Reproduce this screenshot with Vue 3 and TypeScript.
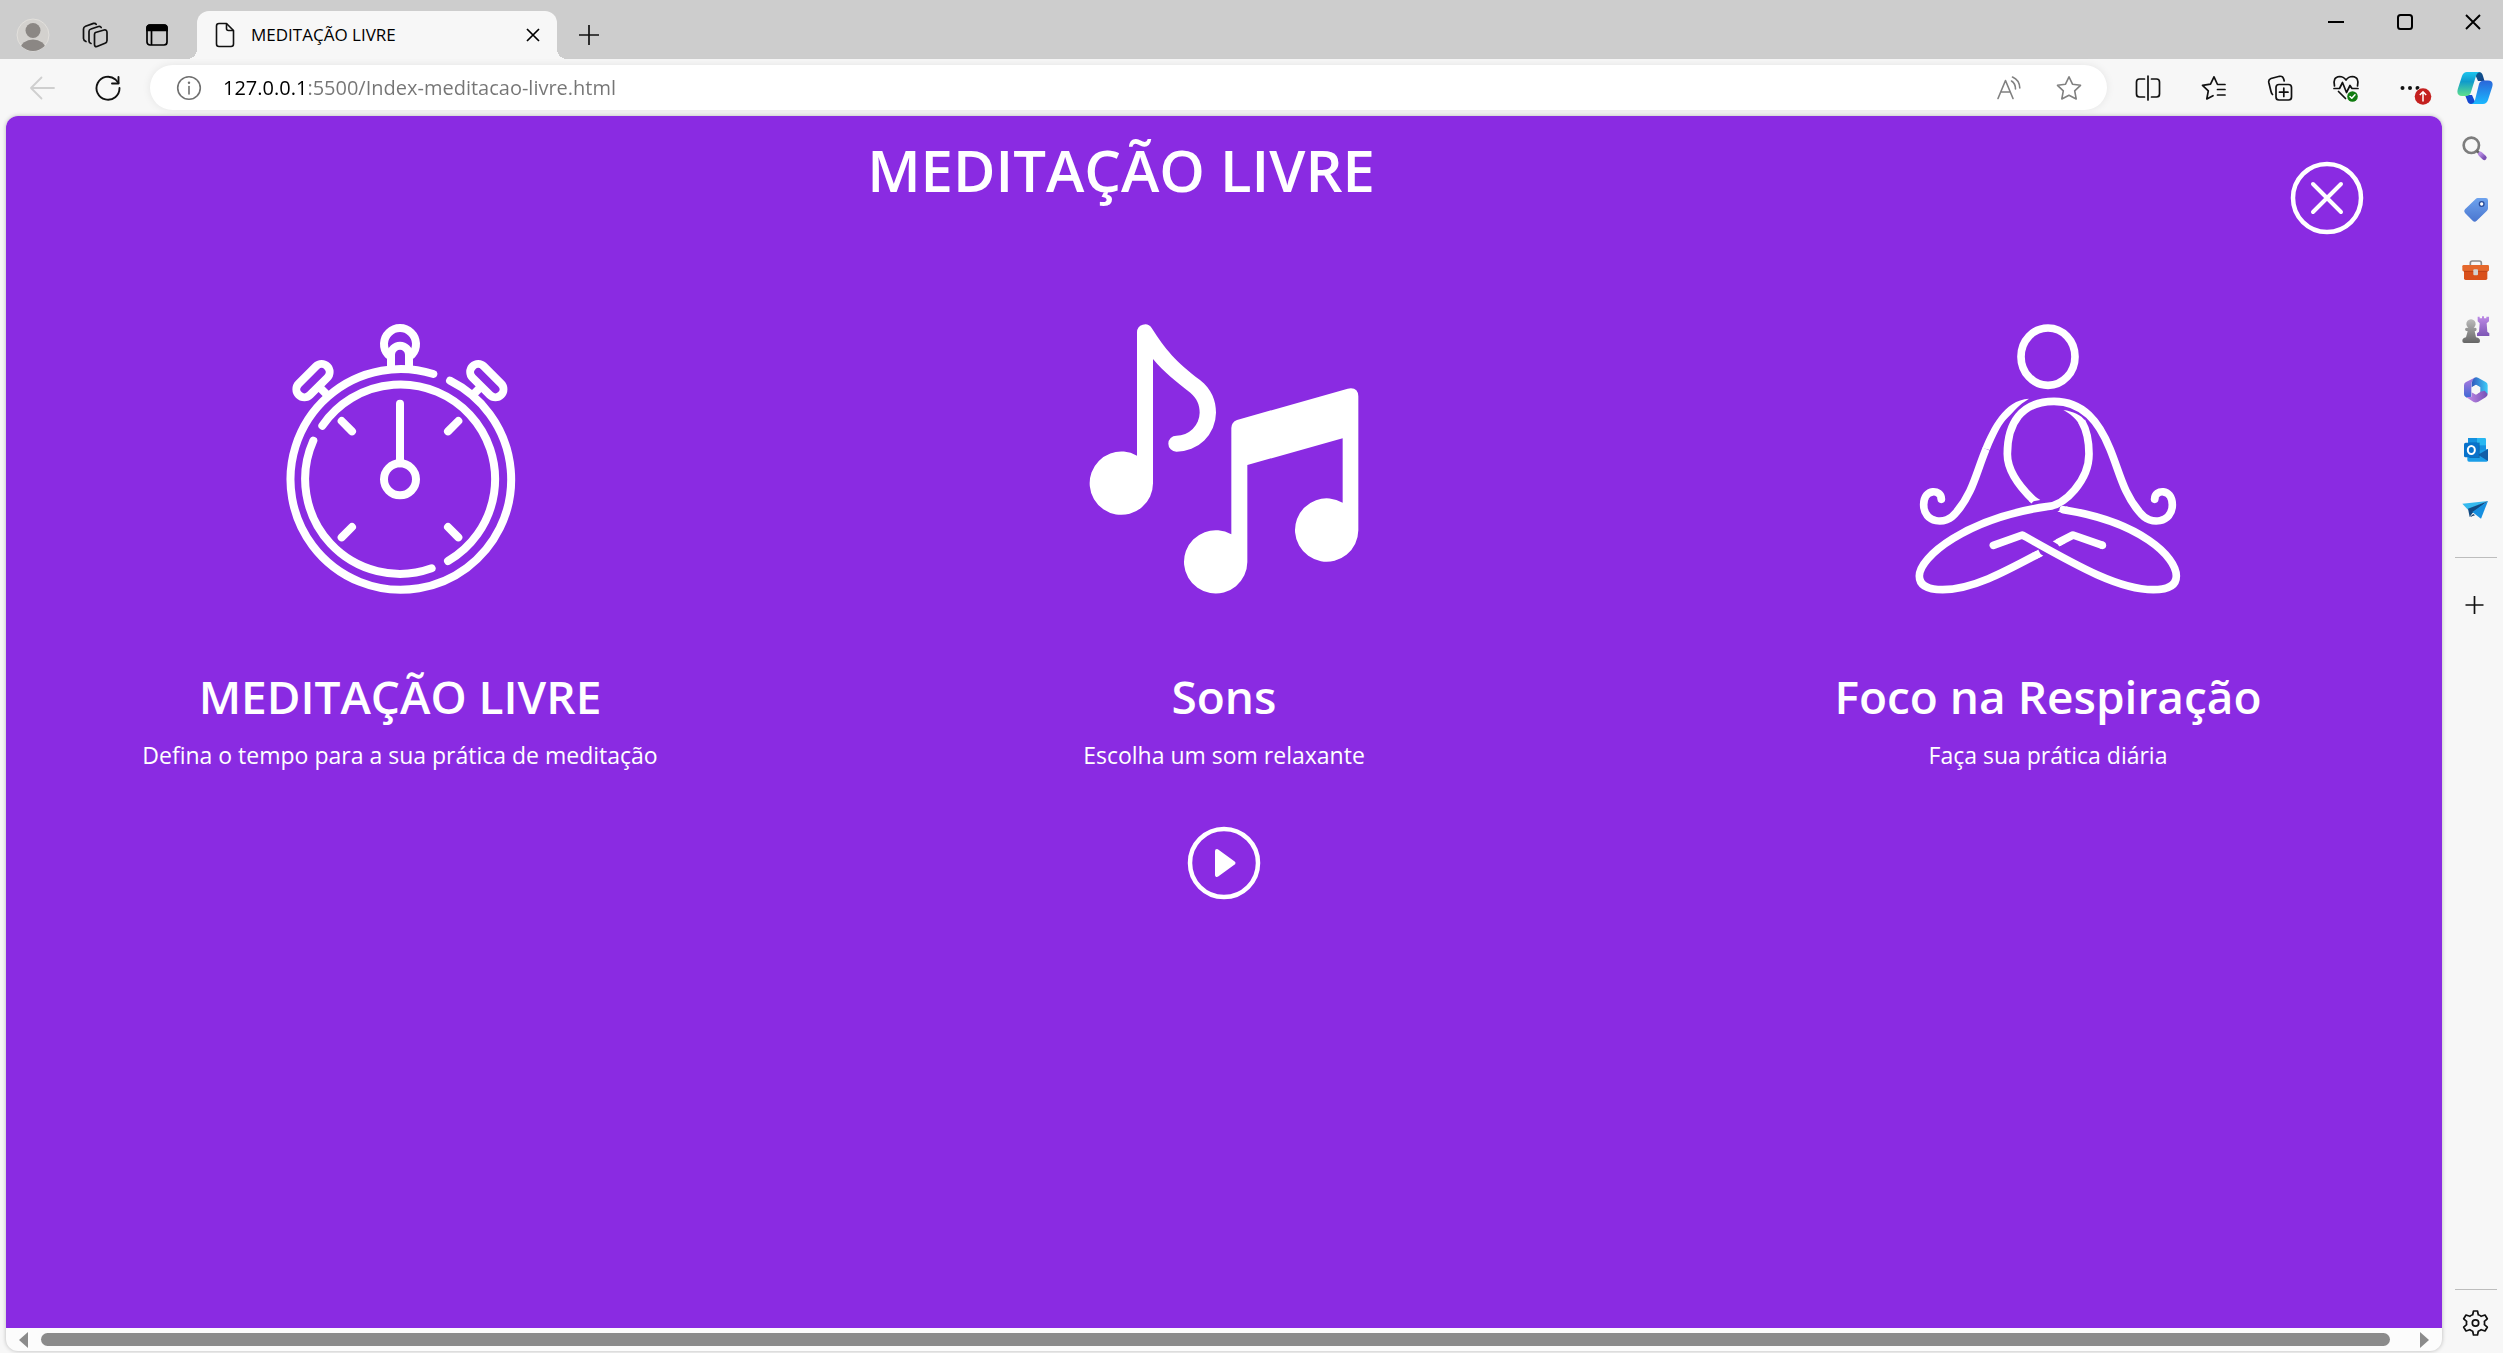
<script setup lang="ts">
import { ref } from 'vue'

const address = ref('127.0.0.1:5500/Index-meditacao-livre.html')
const pageTitle = 'MEDITAÇÃO LIVRE'

interface Card {
  id: 'timer' | 'sounds' | 'breath'
  title: string
  text: string
}

const cards: Card[] = [
  { id: 'timer', title: 'MEDITAÇÃO LIVRE', text: 'Defina o tempo para a sua prática de meditação' },
  { id: 'sounds', title: 'Sons', text: 'Escolha um som relaxante' },
  { id: 'breath', title: 'Foco na Respiração', text: 'Faça sua prática diária' },
]
</script>

<template>
  <div class="browser">
    <header class="tabbar">
      <div class="tab-tools">
        <button class="slot" aria-label="Perfil">
          <svg width="34" height="34" viewBox="0 0 34 34">
            <defs><clipPath id="avatar"><circle cx="17" cy="17" r="16" /></clipPath></defs>
            <circle cx="17" cy="17" r="16" fill="#d3d1ce" stroke="#e2e0dc" />
            <g clip-path="url(#avatar)" fill="#8b8784">
              <circle cx="17" cy="12.500" r="7.500" />
              <ellipse cx="17" cy="30.500" rx="12.500" ry="9" />
            </g>
          </svg>
        </button>
        <button class="slot" aria-label="Espaços de trabalho">
          <svg width="26" height="26" viewBox="0 0 26 26" fill="none" stroke="#111" stroke-width="1.700" stroke-linejoin="round" stroke-linecap="round">
            <path d="M13.500 10.500 L22 8 Q25 7.500 25 10.500 V18.500 Q25 20.500 23 21.200 L15 24.500 Q12.500 25 12.500 22.500 V12.500 Q12.500 11 13.500 10.500Z" />
            <path d="M9 21.500 Q7 21 7 19 V9.500 Q7 7.500 9 7 L16.500 4.500 Q18.500 4 19.200 5.500" />
            <path d="M4 19.500 Q1.500 18.500 1.500 16.500 V7 Q1.500 5 3.500 4.200 L11.500 1.400 Q13.500 1 14.200 2.300" />
          </svg>
        </button>
        <button class="slot" aria-label="Menu de ações da guia">
          <svg width="24" height="24" viewBox="0 0 24 24" fill="none" stroke="#000" stroke-width="1.700">
            <rect x="2" y="2" width="20" height="20" rx="3" />
            <path d="M2 7.500 V5 Q2 2 5 2 H19 Q22 2 22 5 V7.500Z" fill="#000" />
            <path d="M6.500 7 V22" />
          </svg>
        </button>
      </div>
      <div class="tab">
        <svg width="20" height="26" viewBox="0 0 20 26" fill="none" stroke="#111" stroke-width="1.600" stroke-linejoin="round">
          <path d="M4 1.500 H11.500 L18.500 8.500 V22 Q18.500 24.500 16 24.500 H4 Q1.500 24.500 1.500 22 V4 Q1.500 1.500 4 1.500Z" />
          <path d="M11.500 1.500 V6.500 Q11.500 8.500 13.500 8.500 H18.500" />
        </svg>
        <span class="tab-title">{{ pageTitle }}</span>
        <button class="tab-close" aria-label="Fechar guia">
          <svg width="14" height="14" viewBox="0 0 14 14" stroke="#000" stroke-width="1.700"><path d="M1 1 L13 13 M13 1 L1 13" /></svg>
        </button>
      </div>
      <button class="slot" aria-label="Nova guia">
        <svg width="22" height="22" viewBox="0 0 22 22" stroke="#111" stroke-width="1.700"><path d="M11 1 V21 M1 11 H21" /></svg>
      </button>
      <div class="window-buttons">
        <button aria-label="Minimizar">
          <svg width="16" height="16" viewBox="0 0 16 16" stroke="#000" stroke-width="2"><path d="M0 8 H16" /></svg>
        </button>
        <button aria-label="Maximizar">
          <svg width="16" height="16" viewBox="0 0 16 16" fill="none" stroke="#000" stroke-width="2"><rect x="1" y="1" width="14" height="14" rx="2.500" /></svg>
        </button>
        <button aria-label="Fechar janela">
          <svg width="16" height="16" viewBox="0 0 16 16" stroke="#000" stroke-width="1.900"><path d="M1 1 L15 15 M15 1 L1 15" /></svg>
        </button>
      </div>
    </header>

    <nav class="toolbar" aria-label="Navegação">
      <button class="slot" aria-label="Voltar">
        <svg width="26" height="24" viewBox="0 0 26 24" fill="none" stroke="#cfcfcf" stroke-width="1.800" stroke-linecap="round" stroke-linejoin="round"><path d="M25 12 H2 M12.500 1.500 L2 12 L12.500 22.500" /></svg>
      </button>
      <button class="slot" aria-label="Atualizar">
        <svg width="26" height="26" viewBox="0 0 26 26" fill="none" stroke="#111" stroke-width="1.900" stroke-linecap="round" stroke-linejoin="round">
          <path d="M24.500 13 A11.500 11.500 0 1 1 20.500 4.500 L23.500 8" />
          <path d="M23.500 2 V8.500 H17" />
        </svg>
      </button>
      <div class="address">
        <button class="address-slot" aria-label="Informações do site">
          <svg width="26" height="26" viewBox="0 0 26 26" fill="none" stroke="#707070" stroke-width="1.600">
            <circle cx="13" cy="13" r="11.300" /><path d="M13 11.500 V19" stroke-linecap="round" /><circle cx="13" cy="7.800" r="1.200" fill="#707070" stroke="none" />
          </svg>
        </button>
        <input v-model="address" type="text" aria-label="Endereço" spellcheck="false" />
        <button class="address-slot" aria-label="Ler em voz alta">
          <svg width="26" height="26" viewBox="0 0 26 26" fill="none" stroke="#808080" stroke-width="1.600" stroke-linecap="round" stroke-linejoin="round">
            <path d="M2 23.500 L9.500 5.500 L17 23.500 M4.800 17 H14.300" />
            <path d="M15.500 6 Q19.500 8.500 19.500 14" /><path d="M16.500 2 Q23.500 5 23.800 13" />
          </svg>
        </button>
        <button class="address-slot" aria-label="Adicionar aos favoritos">
          <svg width="26" height="26" viewBox="0 0 26 26" fill="none" stroke="#808080" stroke-width="1.600" stroke-linejoin="round">
            <path d="M13 1.800 L16.500 9.200 L24.500 10.300 L18.700 15.900 L20.200 24 L13 20.200 L5.800 24 L7.300 15.900 L1.500 10.300 L9.500 9.200Z" />
          </svg>
        </button>
      </div>
      <button class="slot" aria-label="Dividir tela">
        <svg width="26" height="26" viewBox="0 0 26 26" fill="none" stroke="#111" stroke-width="1.700" stroke-linecap="round">
          <path d="M13 1 V25 M9.500 4 H4.500 Q1.500 4 1.500 7 V19 Q1.500 22 4.500 22 H9.500 M16.500 4 H21.500 Q24.500 4 24.500 7 V19 Q24.500 22 21.500 22 H16.500" />
        </svg>
      </button>
      <button class="slot" aria-label="Favoritos">
        <svg width="26" height="26" viewBox="0 0 26 26" fill="none" stroke="#111" stroke-width="1.700" stroke-linecap="round" stroke-linejoin="round">
          <path d="M24 9.500 H16.500 L13 1.800 L9.500 9.200 L1.500 10.300 L7.300 15.900 L5.800 24 L12 20.700" />
          <path d="M16.500 14.500 H24 M16.500 20 H24" />
        </svg>
      </button>
      <button class="slot" aria-label="Coleções">
        <svg width="26" height="26" viewBox="0 0 26 26" fill="none" stroke="#111" stroke-width="1.700" stroke-linecap="round" stroke-linejoin="round">
          <rect x="9" y="9.500" width="15.500" height="15.500" rx="3" />
          <path d="M16.800 13 V21.500 M12.500 17.200 H21" />
          <path d="M5.500 19.500 Q4.500 18.500 4 16.500 L1.800 7.500 Q1.200 4.500 4 3.500 L12.500 1.300 Q15.800 0.800 16.700 4 L17.200 6" />
        </svg>
      </button>
      <button class="slot" aria-label="Desempenho">
        <svg width="28" height="28" viewBox="0 0 28 28" fill="none" stroke="#111" stroke-width="1.700" stroke-linecap="round" stroke-linejoin="round">
          <path d="M2.500 12 Q0.500 3 7.500 2.500 Q11.500 2.500 14 6 Q16.500 2.500 20.500 2.500 Q27.500 3 25.500 12" />
          <path d="M2 14.500 H7.500 L10.500 8.500 L14.500 18.500 L18 11.500 L20 14.500 H26 M6.500 17.500 L13.500 24.500" />
          <circle cx="20.500" cy="22.500" r="5.300" fill="#107c10" stroke="none" />
          <path d="M18 22.500 L19.800 24.200 L23 20.800" stroke="#fff" stroke-width="1.500" />
        </svg>
      </button>
      <button class="slot more" aria-label="Configurações e mais">
        <svg width="34" height="34" viewBox="0 0 34 34">
          <g fill="#111"><circle cx="4.500" cy="17" r="2" /><circle cx="12" cy="17" r="2" /><circle cx="19.500" cy="17" r="2" /></g>
          <circle cx="25" cy="25.500" r="9" fill="#f7f7f7" /><circle cx="25" cy="25.500" r="8.300" fill="#c4201f" />
          <path d="M25 30.500 V21 M21.800 24 L25 20.800 L28.200 24" fill="none" stroke="#fff" stroke-width="1.500" />
        </svg>
      </button>
      <button class="copilot" aria-label="Copilot">
        <svg width="36" height="34" viewBox="0 0 36 34">
          <defs>
            <linearGradient id="cpA" x1="0" y1="0" x2="0" y2="1"><stop offset="0" stop-color="#1cc5ee" /><stop offset=".4" stop-color="#109bcb" /><stop offset="1" stop-color="#5fe08c" /></linearGradient>
            <linearGradient id="cpB" x1="0" y1="0" x2="0" y2="1"><stop offset="0" stop-color="#2a66d9" /><stop offset="1" stop-color="#1bb8ff" /></linearGradient>
            <linearGradient id="cpC" x1="0" y1="0" x2="1" y2="1"><stop offset="0" stop-color="#0d5f8f" /><stop offset="1" stop-color="#123f86" /></linearGradient>
          </defs>
          <path d="M17 1 H22 Q25 1 26 5 L27.500 10 H21Z" fill="url(#cpC)" />
          <path d="M8 24 H15 L19 33 H14 Q11 33 10 29Z" fill="#1549cf" />
          <path d="M10 1 H23 Q20 1.500 19 5 L14 21 Q13 25 9 25 H5 Q-1 25 0.800 18 L5 5 Q6.500 1 10 1Z" fill="url(#cpA)" />
          <path d="M26 33 H14 Q17 32.500 18 29 L22 13 Q23 9.500 27 9.500 H31 Q37 9.500 35.200 16 L31 29 Q29.500 33 26 33Z" fill="url(#cpB)" />
        </svg>
      </button>
    </nav>

    <div class="body">
      <div class="viewport">
        <main class="page">
          <div class="page-head">
            <h1>{{ pageTitle }}</h1>
            <button class="round-button" aria-label="Fechar">
              <svg width="74" height="74" viewBox="0 0 74 74" fill="none" stroke="#fff" stroke-width="4.500" stroke-linecap="round">
                <circle cx="37" cy="37" r="34" /><path d="M23 23 L51 51 M51 23 L23 51" stroke-width="4" />
              </svg>
            </button>
          </div>
          <div class="cards">
            <section v-for="card in cards" :key="card.id" class="card">
              <svg v-if="card.id === 'timer'" class="art" viewBox="15 72 810 810" fill="none" stroke="#fff" stroke-width="24" stroke-linecap="round">
                <path d="M570 242 A331 331 0 1 1 520 222" />
                <path d="M187 377 A284 284 0 1 1 564 783" />
                <path d="M515 805 A284 284 0 0 1 160 422" />
                <circle cx="420" cy="538" r="48" />
                <path d="M420 490 V311 M245 363 L276 394 M595 363 L564 394 M245 712 L276 681 M595 712 L564 681" />
                <path d="M384 164 A48 48 0 1 1 456 164" />
                <path d="M393 207 V164 A27 27 0 0 1 447 164 V207" stroke-linecap="butt" />
                <rect x="98.500" y="218" width="121" height="48" rx="24" transform="rotate(-45 159 242)" />
                <rect x="620" y="218" width="121" height="48" rx="24" transform="rotate(45 680.500 242)" />
                <path d="M176 259 L200 283 M664 259 L640 283" stroke-linecap="butt" />
              </svg>
              <svg v-else-if="card.id === 'sounds'" class="art" viewBox="57 72 810 810" fill="#fff">
                <path d="M201 467 V97 A24 24 0 0 1 245 84 C285 147 318 186 390 240 C425 268 438 302 438 338 A118 118 0 0 1 319 455 A24 24 0 0 1 319 407 A70 70 0 0 0 389 338 C389 315 381 295 361 278 C320 247 281 215 249 177 V549 A95 95 0 1 1 201 467Z" />
                <path d="M484 703 V384 Q484 367 501 360 L833 266 Q864 260 865 289 V691 A95 95 0 1 1 818 608 V415 L532 495 V786 A95 95 0 1 1 484 703Z" />
              </svg>
              <svg v-else class="art" viewBox="69 72 810 810" fill="none" stroke="#fff" stroke-width="23" stroke-linecap="round" stroke-linejoin="round">
                <ellipse cx="474" cy="170" rx="81" ry="86" />
                <path d="M154 597 C154 568 102 563 101 614 C101 668 167 680 199 637 C248 580 258 520 288 447" stroke-linecap="butt" />
                <circle cx="154" cy="598" r="11.500" fill="#fff" stroke="none" />
                <path d="M277 444 C302 384 342 300 417 296 C385 315 370 336 352 354 C335 370 320 400 299 450Z" fill="#fff" stroke="none" />
                <path d="M432 602 C375 548 352 505 352 462 C352 370 394 304 492 304 C580 304 627 366 660 447 C690 520 700 580 749 637 C781 680 847 668 847 614 C846 563 794 568 794 597" stroke-linecap="butt" />
                <circle cx="794" cy="598" r="11.500" fill="#fff" stroke="none" />
                <path d="M417 606 L451 600 L432 588Z" fill="#fff" stroke="none" />
                <path d="M520 330 C548 334 575 345 585 362 L567 372 C556 354 541 342 520 330Z" fill="#fff" stroke="none" />
                <path d="M575 364 C590 390 597 420 597 462 C597 540 525 617 470 620 C230 655 88 770 88 828 C88 858 115 869 158 869 C245 869 340 818 450 759" stroke-linecap="butt" />
                <path d="M437 753 L460 767 L440 776 L425 760Z M502 635 L531 619 L545 634 L525 638Z M488 724 L511 738 L528 728 L510 714Z" fill="#fff" stroke="none" />
                <path d="M520 629 C750 665 859 770 859 828 C859 858 832 869 790 869 C680 869 540 785 397 705 L310 736" />
                <path d="M502 729 L549 705 L638 736" stroke-linecap="butt" /><circle cx="637" cy="736" r="11.500" fill="#fff" stroke="none" />
              </svg>
              <h2>{{ card.title }}</h2>
              <p>{{ card.text }}</p>
              <button v-if="card.id === 'sounds'" class="round-button play" aria-label="Tocar">
                <svg width="74" height="74" viewBox="0 0 74 74">
                  <circle cx="37" cy="37" r="34" fill="none" stroke="#fff" stroke-width="4.500" />
                  <path d="M30 25 L46.500 37 L30 49Z" fill="#fff" stroke="#fff" stroke-width="4" stroke-linejoin="round" />
                </svg>
              </button>
            </section>
          </div>
        </main>
        <div class="scrollbar">
          <button aria-label="Rolar para a esquerda"><svg width="9" height="16" viewBox="0 0 9 16"><path d="M9 0 V16 L0 8Z" fill="#8b8b8b" /></svg></button>
          <div class="thumb"></div>
          <button aria-label="Rolar para a direita"><svg width="9" height="16" viewBox="0 0 9 16"><path d="M0 0 V16 L9 8Z" fill="#8b8b8b" /></svg></button>
        </div>
      </div>

      <aside class="sidebar">
        <button aria-label="Pesquisar">
          <svg viewBox="126 79 84 84">
            <defs><linearGradient id="sb1" x1="0" y1="0" x2="1" y2="1"><stop offset="0" stop-color="#b58ae0" /><stop offset="1" stop-color="#7c50b4" /></linearGradient></defs>
            <circle cx="154" cy="107" r="23" fill="none" stroke="#7d7d7d" stroke-width="8" />
            <path d="M170 123 L180 132" stroke="#666" stroke-width="8" />
            <path d="M181 133 L193 144" stroke="url(#sb1)" stroke-width="14" stroke-linecap="round" />
          </svg>
        </button>
        <button aria-label="Compras">
          <svg viewBox="126 258 84 84">
            <defs><linearGradient id="sb2" x1="0" y1="0" x2="0" y2="1"><stop offset="0" stop-color="#6ea3ee" /><stop offset="1" stop-color="#4a76cf" /></linearGradient></defs>
            <path d="M173 264 H197 Q204 264 204 271 V295 Q204 299 201 302 L170 332 Q164 338 158 332 L135 309 Q130 303 135 298 L167 267 Q170 264 173 264Z" fill="url(#sb2)" />
            <circle cx="185" cy="282" r="7" fill="#fff" stroke="#294c9a" stroke-width="4" />
          </svg>
        </button>
        <button aria-label="Ferramentas">
          <svg viewBox="126 438 84 84">
            <path d="M151 466 V459 Q151 453 157 453 H178 Q184 453 184 459 V466" fill="none" stroke="#8c8c8c" stroke-width="5" />
            <rect x="132" y="478" width="70" height="32" rx="5" fill="#d9501b" />
            <rect x="127" y="465" width="80" height="19" rx="4" fill="#e5682c" />
            <path d="M131 484 H203" stroke="#ad3810" stroke-width="2" />
            <rect x="160" y="478" width="14" height="18" rx="3" fill="#d2d2d2" />
          </svg>
        </button>
        <button aria-label="Jogos">
          <svg viewBox="126 618 84 84">
            <defs><linearGradient id="sb3" x1="0" y1="0" x2="0" y2="1"><stop offset="0" stop-color="#bd8ae6" /><stop offset="1" stop-color="#7d56b5" /></linearGradient><linearGradient id="sb4" x1="0" y1="0" x2="0" y2="1"><stop offset="0" stop-color="#bbb" /><stop offset="1" stop-color="#666" /></linearGradient></defs>
            <path d="M173 620 H179 V625 H186 V619 H192 V625 H199 V620 H207 V634 L200 640 L202 665 L208 670 V678 H171 V670 L177 665 L179 640 L173 634Z" fill="url(#sb3)" />
            <path d="M145 653 A14 14 0 1 1 161 653 H166 Q170 653 170 658 Q170 664 164 664 L168 682 Q180 684 180 693 Q180 699 174 699 H133 Q127 699 127 693 Q127 684 138 682 L143 664 Q135 664 135 658 Q135 653 140 653Z" fill="url(#sb4)" />
          </svg>
        </button>
        <button aria-label="Microsoft 365">
          <svg viewBox="126 798 84 84">
            <defs><linearGradient id="sb5" x1="0" y1="0" x2="0" y2="1"><stop offset="0" stop-color="#b67be0" /><stop offset="1" stop-color="#3e68d4" /></linearGradient><linearGradient id="sb6"><stop offset="0" stop-color="#3158bd" /><stop offset="1" stop-color="#3dccf8" /></linearGradient><linearGradient id="sb7"><stop offset="0" stop-color="#c58be8" /><stop offset="1" stop-color="#7451b5" /></linearGradient></defs>
            <path d="M168 801 L138 816 Q132 819 132 826 V853 Q132 858 137 861 L141 863 L154 860 V820 Q158 808 168 801Z" fill="url(#sb5)" />
            <path d="M155 820 V832 L168 824 L181 832 V846 L203 852 V826 Q203 819 197 816 L174 803 Q168 800 163 804 Q155 810 155 820Z" fill="url(#sb6)" />
            <path d="M181 845 L168 854 L155 847 V860 L139 862 L161 876 Q168 879 175 875 L197 862 Q203 858 203 852 L194 842Z" fill="url(#sb7)" />
            <path d="M168 825 L180 832 V846 L168 853 L156 846 V832Z" fill="#f7f7f7" />
          </svg>
        </button>
        <button aria-label="Outlook">
          <svg viewBox="126 108 84 84">
            <rect x="144" y="114" width="54" height="45" rx="4" fill="#28b7f1" /><path d="M144 114 H171 V136 H144Z" fill="#1490df" /><path d="M171 136 H198 V155 H171Z" fill="#1490df" />
            <path d="M142 158 L204 147 V181 Q204 185 199 185 H147 Q142 185 142 180Z" fill="#1a9de8" /><path d="M174 164 L204 147 V183Z" fill="#125ea8" />
            <path d="M148 128 H179 V174 H148Z" fill="#0a4b8b" opacity=".6" /><rect x="132" y="128" width="44" height="44" rx="5" fill="#0872cb" />
            <ellipse cx="154" cy="150" rx="10.500" ry="12" fill="none" stroke="#fff" stroke-width="6" />
          </svg>
        </button>
        <button aria-label="Drop">
          <svg viewBox="126 288 84 84">
            <path d="M204 303 L127 311 L144 329Z" fill="#35b9ee" /><path d="M144 326 L204 303 L157 340 L149 351Z" fill="#124a83" /><path d="M204 303 L157 336 L183 356Z" fill="#168fe0" /><path d="M149 351 L160 342 L165 346Z" fill="#143a66" />
          </svg>
        </button>
        <hr />
        <button aria-label="Personalizar">
          <svg viewBox="0 0 28 28" stroke="#111" stroke-width="1.700"><path d="M12.500 5 V23 M3.500 14 H21.500" /></svg>
        </button>
        <hr class="bottom-rule" />
        <button aria-label="Configurações">
          <svg viewBox="0 0 28 28" fill="none" stroke="#111" stroke-width="1.700" stroke-linejoin="round">
            <path d="M11.500 2 H15.500 L16.300 5.800 Q18 6.300 19.200 7.300 L23 6 L25.300 9.800 L22.400 12.300 Q22.700 14 22.400 15.700 L25.300 18.200 L23 22 L19.200 20.700 Q18 21.700 16.300 22.200 L15.500 26 H11.500 L10.700 22.200 Q9 21.700 7.800 20.700 L4 22 L1.700 18.200 L4.600 15.700 Q4.300 14 4.600 12.300 L1.700 9.800 L4 6 L7.800 7.300 Q9 6.300 10.700 5.800Z" />
            <circle cx="13.500" cy="14" r="3.200" />
          </svg>
        </button>
      </aside>
    </div>
  </div>
</template>

<style>
body {
  margin: 0;
  background: #f7f7f7;
}
</style>

<style scoped>
.browser {
  display: flex;
  flex-direction: column;
  min-height: 100vh;
  background: #f7f7f7;
  font-family: "Open Sans", "Noto Sans", sans-serif;
}

button {
  display: flex;
  align-items: center;
  justify-content: center;
  flex: none;
  padding: 0;
  border: 0;
  background: none;
  color: inherit;
}

svg {
  display: block;
  flex: none;
}

.tabbar {
  display: flex;
  height: 59px;
  background: #cdcdcd;
}

.tab-tools {
  display: flex;
  padding: 10px 9px 0 2px;
}

.tab-tools .slot {
  width: 62px;
  height: 49px;
}

.tab {
  position: relative;
  display: flex;
  align-items: center;
  box-sizing: border-box;
  width: 360px;
  height: 48px;
  margin-top: 11px;
  padding: 0 17px 0 18px;
  border-radius: 12px 12px 0 0;
  background: #f7f7f7;
}

.tab::before,
.tab::after {
  content: "";
  position: absolute;
  bottom: 0;
  width: 10px;
  height: 10px;
}

.tab::before {
  right: 100%;
  background: radial-gradient(circle at 0 0, transparent 10px, #f7f7f7 10px);
}

.tab::after {
  left: 100%;
  background: radial-gradient(circle at 100% 0, transparent 10px, #f7f7f7 10px);
}

.tab-title {
  flex: 1;
  padding-left: 16px;
  font-size: 17px;
  line-height: 24px;
}

.tabbar > .slot {
  width: 64px;
  height: 49px;
  margin-top: 10px;
}

.window-buttons {
  display: flex;
  margin-left: auto;
}

.window-buttons button {
  width: 69px;
  height: 44px;
}

.window-buttons button:last-child {
  width: 60px;
  margin-left: 4px;
}

.toolbar {
  display: flex;
  align-items: center;
  padding: 6px 0 6px 9px;
}

.toolbar .slot {
  width: 66px;
  height: 45px;
}

.address {
  display: flex;
  flex: 1;
  align-items: center;
  height: 45px;
  margin: 0 8px 0 9px;
  padding: 0 8px 0 9px;
  border-radius: 23px;
  background: #fff;
  box-shadow: 0 0 8px rgba(0, 0, 0, 0.08);
}

.address-slot {
  width: 60px;
  height: 45px;
}

.address input {
  flex: 1;
  min-width: 0;
  height: 45px;
  padding: 0 0 0 4px;
  border: 0;
  outline: 0;
  background: linear-gradient(90deg, #000 87px, #757575 87px);
  background-clip: text;
  -webkit-background-clip: text;
  color: transparent;
  caret-color: #000;
  font: 20px "Open Sans", "Noto Sans", sans-serif;
}

.toolbar .more {
  padding: 0 0 0 5px;
}

.copilot {
  width: 58px;
  height: 45px;
  padding-left: 2px;
}

.body {
  display: flex;
  flex: 1;
}

.viewport {
  display: flex;
  flex: 1;
  flex-direction: column;
  min-width: 0;
  margin: 0 0 2px 6px;
  border-radius: 12px;
  background: #fcfcfc;
  box-shadow: 0 0 4px rgba(0, 0, 0, 0.25);
  overflow: hidden;
}

.page {
  flex: 1;
  background: #8a2be2;
  color: #fff;
}

.page-head {
  display: flex;
  align-items: flex-start;
  padding: 16px 78px 0 0;
}

h1 {
  flex: 1;
  margin: 0;
  padding-right: 54px;
  font-size: 58px;
  font-weight: 600;
  line-height: 76px;
  text-align: center;
}

.page-head .round-button {
  margin-top: 29px;
}

.round-button {
  width: 74px;
  height: 74px;
  border-radius: 50%;
}

.cards {
  display: grid;
  grid-template-columns: repeat(3, 1fr);
  gap: 36px;
  padding-top: 89px;
}

.card {
  display: flex;
  flex-direction: column;
  align-items: center;
}

.art {
  width: 270px;
  height: 270px;
}

h2 {
  margin: 72px 0 0;
  font-size: 46px;
  font-weight: 600;
  line-height: 60px;
}

p {
  margin: 14px 0 0;
  font-size: 23px;
  line-height: 30px;
}

.play {
  margin-top: 56px;
}

.scrollbar {
  display: flex;
  align-items: center;
  height: 23px;
  padding: 0 13px;
}

.scrollbar button {
  width: 9px;
  height: 23px;
}

.thumb {
  flex: 1;
  height: 13px;
  margin: 0 30px 0 13px;
  border-radius: 7px;
  background: #8b8b8b;
}

.sidebar {
  display: flex;
  flex-direction: column;
  align-items: center;
  width: 55px;
  padding: 4px 0 0 6px;
}

.sidebar button {
  width: 55px;
  height: 60px;
}

.sidebar svg {
  width: 28px;
  height: 28px;
}

hr {
  width: 42px;
  height: 1px;
  margin: 17px 0;
  border: 0;
  background: #bdbdbd;
}

.bottom-rule {
  margin: auto 0 3px;
}
</style>
